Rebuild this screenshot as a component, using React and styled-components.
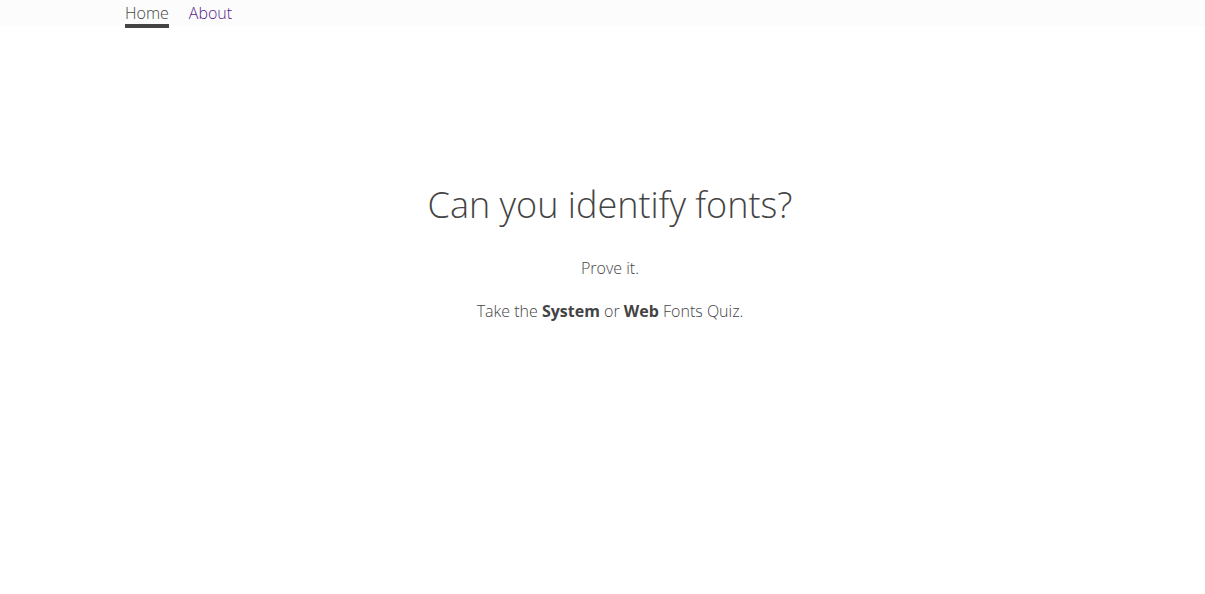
import React from "react";
import styled, { createGlobalStyle } from "styled-components";

const Global = createGlobalStyle`
  html, body { margin: 0; padding: 0; background: #fff; }
  body { font-family: "Open Sans", "Liberation Sans", sans-serif; font-weight: 300; color: #444; }
`;

const Nav = styled.nav`
  background: #fcfcfc;
  height: 26px;
  display: flex;
  align-items: flex-start;
  padding-left: 125px;
  gap: 20px;
`;

const NavLink = styled.a`
  position: relative;
  font-size: 16px;
  line-height: 26px;
  text-decoration: none;
  color: ${p => (p.$active ? "#444" : "#551a8b")};
  ${p => p.$active && `
    &::after {
      content: "";
      position: absolute;
      left: 0; right: 0;
      top: 24px;
      height: 4px;
      background: #444;
    }
  `}
`;

const Main = styled.main`
  display: flex;
  flex-direction: column;
  align-items: center;
  padding-top: 154px;
  padding-left: 15px;
`;

const Title = styled.h1`
  margin: 0;
  font-size: 36px;
  font-weight: 300;
  line-height: 50px;
  color: #444;
`;

const Para = styled.p`
  margin: ${p => p.$mt}px 0 0;
  font-size: 16px;
  line-height: 22px;
  color: #444;
`;

const Strong = styled.strong`
  font-weight: 700;
`;

export default function App() {
  return (
    <>
      <Global />
      <Nav>
        <NavLink href="#" $active>Home</NavLink>
        <NavLink href="#">About</NavLink>
      </Nav>
      <Main>
        <Title>Can you identify fonts?</Title>
        <Para $mt={27}>Prove it.</Para>
        <Para $mt={21}>Take the <Strong>System</Strong> or <Strong>Web</Strong> Fonts Quiz.</Para>
      </Main>
    </>
  );
}
